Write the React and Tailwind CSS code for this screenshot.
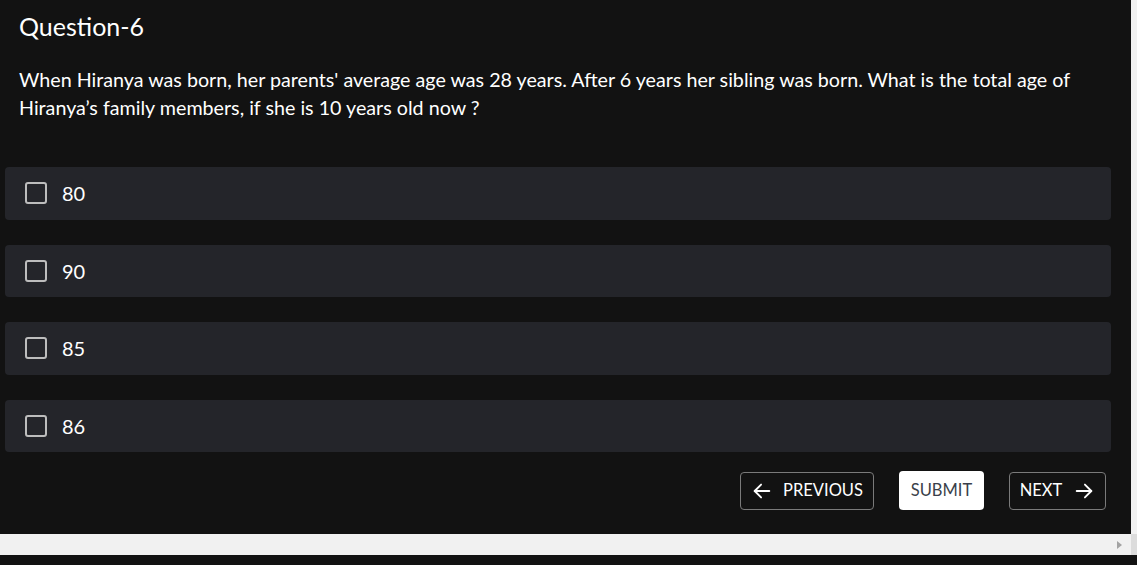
import React from "react";

const options = ["80", "90", "85", "86"];

function ArrowLeft() {
  return (
    <svg width="22" height="22" viewBox="0 0 24 24" fill="none" stroke="currentColor" strokeWidth="2" strokeLinecap="round" strokeLinejoin="round">
      <path d="M20 12H4" />
      <path d="M11 19l-7-7 7-7" />
    </svg>
  );
}
function ArrowRight() {
  return (
    <svg width="22" height="22" viewBox="0 0 24 24" fill="none" stroke="currentColor" strokeWidth="2" strokeLinecap="round" strokeLinejoin="round">
      <path d="M4 12h16" />
      <path d="M13 5l7 7-7 7" />
    </svg>
  );
}

export default function App() {
  return (
    <div className="w-[1137px] h-[565px] bg-[#121212] flex flex-col overflow-hidden" style={{ fontFamily: "Lato, 'Open Sans', sans-serif" }}>
      <div className="flex h-[534px]">
        <div className="w-[1131px] h-full flex flex-col">
          <div className="px-[19px] pt-[11px]">
            <h1 className="text-[25px] leading-[30px] text-white font-normal">Question-6</h1>
            <p className="mt-[25px] text-[19.7px] leading-[28px] text-white">
              When Hiranya was born, her parents' average age was 28 years. After 6 years her sibling was born. What is the total age of Hiranya’s family members, if she is 10 years old now ?
            </p>
          </div>
          <div className="mt-[45px] pl-[5px] pr-[20px] flex flex-col gap-[25px]">
            {options.map((o) => (
              <div key={o} className="h-[52.5px] rounded-[4px] bg-[#24252a] flex items-center pl-[20px]">
                <div className="w-[22px] h-[22px] border-[2.5px] border-[#bdbdbd] rounded-[3px]" />
                <span className="ml-[15px] text-[20px] text-white">{o}</span>
              </div>
            ))}
          </div>
          <div className="mt-[18.5px] flex justify-end gap-[25px] pr-[25px]">
            <button className="h-[38px] mt-[1px] w-[134px] border border-[#7a7a7a] rounded-[4px] flex items-center justify-center gap-[10px] text-white text-[16.5px]">
              <ArrowLeft />
              <span>PREVIOUS</span>
            </button>
            <button className="h-[39px] w-[85px] bg-white rounded-[4px] flex items-center justify-center text-[#3a3f4a] text-[16.5px]">
              SUBMIT
            </button>
            <button className="h-[38px] mt-[1px] w-[97px] border border-[#7a7a7a] rounded-[4px] flex items-center justify-center gap-[11px] text-white text-[16.5px]">
              <span>NEXT</span>
              <ArrowRight />
            </button>
          </div>
        </div>
        <div className="w-[6px] h-full bg-[#f1f1f1]" />
      </div>
      <div className="flex h-[21px]">
        <div className="w-[1131px] bg-[#f1f1f1] flex items-center justify-end pr-[8px]">
          <svg width="6" height="8" viewBox="0 0 6 8"><path d="M0 0L5 4L0 8Z" fill="#a3a3a3" /></svg>
        </div>
        <div className="w-[6px] bg-[#dcdcdc]" />
      </div>
      <div className="flex-1 bg-[#121212]" />
    </div>
  );
}
